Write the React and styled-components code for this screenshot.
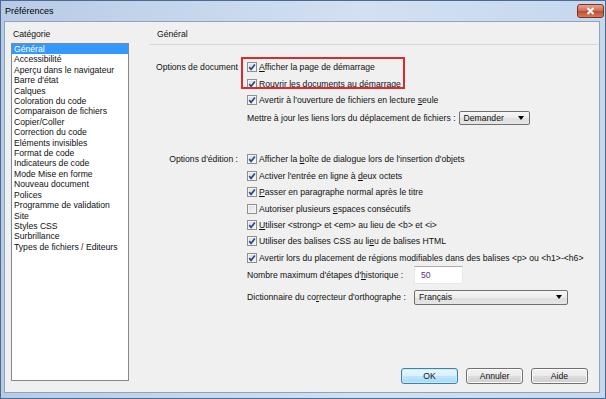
import React from 'react'
import styled, { createGlobalStyle } from 'styled-components'

const GlobalStyle = createGlobalStyle`
    html, body {
        margin: 0;
        padding: 0;
        width: 606px;
        height: 399px;
        overflow: hidden;
        background: #c4d5ec;
    }
    body {
        font-family: "Liberation Sans", Arial, sans-serif;
        font-size: 8.65px;
        color: #111;
    }
`

const categories = [
    'Général', 'Accessibilité', 'Aperçu dans le navigateur', "Barre d'état", 'Calques',
    'Coloration du code', 'Comparaison de fichiers', 'Copier/Coller', 'Correction du code',
    'Eléments invisibles', 'Format de code', 'Indicateurs de code', 'Mode Mise en forme',
    'Nouveau document', 'Polices', 'Programme de validation', 'Site', 'Styles CSS',
    'Surbrillance', 'Types de fichiers / Editeurs'
]

function Check({ checked }) {
    return (
        <Box>
            {checked && (
                <svg width="8" height="8" viewBox="0 0 8 8">
                    <path d="M1.2 4.1 L3.1 6.3 L6.9 1.4" fill="none" stroke="#2c4a8a" strokeWidth="1.7" />
                </svg>
            )}
        </Box>
    )
}

function Option({ checked = true, children }) {
    return (
        <CheckRow>
            <Check checked={checked} />
            <span>{children}</span>
        </CheckRow>
    )
}

function App() {
    return (
        <>
            <GlobalStyle />
            <Window>
                <TitleBar>
                    <span>Préférences</span>
                    <CloseButton>
                        <svg width="9" height="8" viewBox="0 0 9 8">
                            <path d="M1.5 1 L7.5 7 M7.5 1 L1.5 7" stroke="#fff" strokeWidth="2" />
                        </svg>
                    </CloseButton>
                </TitleBar>
                <Client>
                    <LeftCol>
                        <Caption>Catégorie</Caption>
                        <List>
                            {categories.map((c, i) => (
                                <Item key={c} $selected={i === 0}>{c}</Item>
                            ))}
                        </List>
                    </LeftCol>
                    <RightCol>
                        <Header>Général</Header>

                        <Section $top={14}>
                            <SectionLabel>Options de document</SectionLabel>
                            <Rows>
                                <Highlight>
                                    <Option><Key>A</Key>fficher la page de démarrage</Option>
                                    <Option>R<Key>o</Key>uvrir les documents au démarrage</Option>
                                </Highlight>
                                <Option>Avertir à l'ouverture de fichiers en lecture <Key>s</Key>eule</Option>
                                <InlineRow>
                                    <span>Mettre à jour les liens lors du déplacement de fichiers :</span>
                                    <Combo $width={71} $height={14}>
                                        <span>Demander</span>
                                        <Arrow />
                                    </Combo>
                                </InlineRow>
                            </Rows>
                        </Section>

                        <Section $top={24}>
                            <SectionLabel>Options d'édition :</SectionLabel>
                            <Rows>
                                <Option>Afficher la <Key>b</Key>oîte de dialogue lors de l'insertion d'objets</Option>
                                <Option>Activer l'entrée en ligne à <Key>d</Key>eux octets</Option>
                                <Option><Key>P</Key>asser en paragraphe normal après le titre</Option>
                                <Option checked={false}>Autoriser plusieurs <Key>e</Key>spaces consécutifs</Option>
                                <Option><Key>U</Key>tiliser &lt;strong&gt; et &lt;em&gt; au lieu de &lt;b&gt; et &lt;i&gt;</Option>
                                <Option>Utiliser des balises CSS au li<Key>e</Key>u de balises HTML</Option>
                                <Option>Avertir lors du placement de régions modifiables dans des balises &lt;p&gt; ou &lt;h1&gt;-&lt;h6&gt;</Option>
                                <FieldRow $height={17.4}>
                                    <span>Nombre maximum d'étapes d'<Key>h</Key>istorique :</span>
                                    <TextInput>50</TextInput>
                                </FieldRow>
                                <FieldRow $height={18} $top={5}>
                                    <span>Dictionnaire du co<Key>r</Key>recteur d'orthographe :</span>
                                    <Combo $width={154} $height={15}>
                                        <span>Français</span>
                                        <Arrow />
                                    </Combo>
                                </FieldRow>
                            </Rows>
                        </Section>

                        <Footer>
                            <Button $primary>OK</Button>
                            <Button>Annuler</Button>
                            <Button>Aide</Button>
                        </Footer>
                    </RightCol>
                </Client>
            </Window>
        </>
    )
}

const Window = styled.div`
    box-sizing: border-box;
    width: 606px;
    height: 399px;
    display: flex;
    flex-direction: column;
    border: 1px solid #4d6a8f;
    background: linear-gradient(to right, #b8cbe6, #d3e0f1 60%, #c6d7ee);
`

const TitleBar = styled.div`
    height: 20px;
    display: flex;
    align-items: center;
    justify-content: space-between;
    padding: 0 1px 0 4px;
    font-size: 9px;
    color: #000;
`

const CloseButton = styled.div`
    width: 27px;
    height: 14px;
    box-sizing: border-box;
    display: flex;
    align-items: center;
    justify-content: center;
    border: 1px solid #7a3426;
    border-radius: 3px;
    background: linear-gradient(to bottom, #e6a595, #d06a52 50%, #c04a32 51%, #d27a5a);
`

const Client = styled.div`
    flex: 1;
    display: flex;
    margin: 0 5px 5px 3px;
    border: 1px solid #8da3bf;
    background: #f0f0f0;
    min-height: 0;
`

const LeftCol = styled.div`
    width: 118px;
    display: flex;
    flex-direction: column;
    padding: 7px 0 11px 6px;
`

const Caption = styled.div`
    line-height: 10px;
    padding-left: 2px;
`

const List = styled.div`
    flex: 1;
    margin-top: 4px;
    background: #fff;
    border: 1px solid #828790;
`

const Item = styled.div`
    line-height: 10.4px;
    padding-left: 2px;
    white-space: nowrap;
    background: ${p => (p.$selected ? '#3399ff' : 'transparent')};
    color: ${p => (p.$selected ? '#fff' : '#111')};
`

const RightCol = styled.div`
    flex: 1;
    display: flex;
    flex-direction: column;
    margin-left: 21px;
    padding-right: 1px;
`

const Header = styled.div`
    line-height: 10px;
    padding: 7px 0 5px 7px;
    border-bottom: 1px solid #d3d8de;
`

const Section = styled.div`
    display: grid;
    grid-template-columns: 88px 1fr;
    column-gap: 9px;
    margin-top: ${p => p.$top}px;
`

const SectionLabel = styled.div`
    text-align: right;
    line-height: 16.4px;
    white-space: nowrap;
`

const Rows = styled.div`
    display: flex;
    flex-direction: column;
`

const Highlight = styled.div`
    position: relative;

    &::after {
        content: '';
        position: absolute;
        left: -6px;
        top: -2px;
        width: 164px;
        height: 32px;
        box-sizing: border-box;
        border: 2px solid #de2a2f;
        pointer-events: none;
    }
`

const CheckRow = styled.div`
    height: 16.4px;
    display: flex;
    align-items: center;
    gap: 2px;
    white-space: nowrap;
`

const Box = styled.span`
    width: 10px;
    height: 10px;
    box-sizing: border-box;
    flex: none;
    display: flex;
    align-items: center;
    justify-content: center;
    border: 1px solid #8e8f8f;
    background: linear-gradient(135deg, #d6d9de, #fbfbfb);
    box-shadow: inset 0 0 0 1px #f4f4f4;
`

const Key = styled.u`
    text-decoration-thickness: 1px;
    text-underline-offset: 1px;
`

const InlineRow = styled.div`
    height: 18px;
    margin-top: 1px;
    display: flex;
    align-items: center;
    gap: 3px;
    white-space: nowrap;
`

const FieldRow = styled.div`
    height: ${p => p.$height}px;
    margin-top: ${p => p.$top || 0}px;
    display: grid;
    grid-template-columns: 167px auto;
    align-items: center;
    justify-content: start;
    white-space: nowrap;
`

const Combo = styled.div`
    width: ${p => p.$width}px;
    height: ${p => p.$height}px;
    box-sizing: border-box;
    display: flex;
    align-items: center;
    justify-content: space-between;
    padding: 0 5px 0 4px;
    border: 1px solid #707070;
    border-radius: 2px;
    background: linear-gradient(to bottom, #f6f6f6, #ececec 50%, #dfdfdf 51%, #e6e6e6);
`

const Arrow = styled.span`
    width: 0;
    height: 0;
    border-left: 3px solid transparent;
    border-right: 3px solid transparent;
    border-top: 4px solid #000;
`

const TextInput = styled.div`
    width: 49px;
    height: 18px;
    box-sizing: border-box;
    display: flex;
    align-items: center;
    padding-left: 6px;
    background: #fff;
    border: 1px solid #e3e9ef;
    border-top-color: #abadb3;
    color: #5b2f86;
`

const Footer = styled.div`
    margin-top: auto;
    display: flex;
    justify-content: flex-end;
    gap: 8px;
    padding: 0 10px 8px 0;
`

const Button = styled.div`
    width: 57px;
    height: 16px;
    box-sizing: border-box;
    display: flex;
    align-items: center;
    justify-content: center;
    border: 1px solid ${p => (p.$primary ? '#3c7fb1' : '#707070')};
    border-radius: 3px;
    background: ${p => (p.$primary
        ? 'linear-gradient(to bottom, #eaf6fd, #d9f0fc 50%, #bee6fd 51%, #a7d9f5)'
        : 'linear-gradient(to bottom, #f2f2f2, #ebebeb 50%, #dddddd 51%, #cfcfcf)')};
    box-shadow: inset 0 0 0 1px ${p => (p.$primary ? '#c7ecfa' : '#fcfcfc')};
`

export default App
